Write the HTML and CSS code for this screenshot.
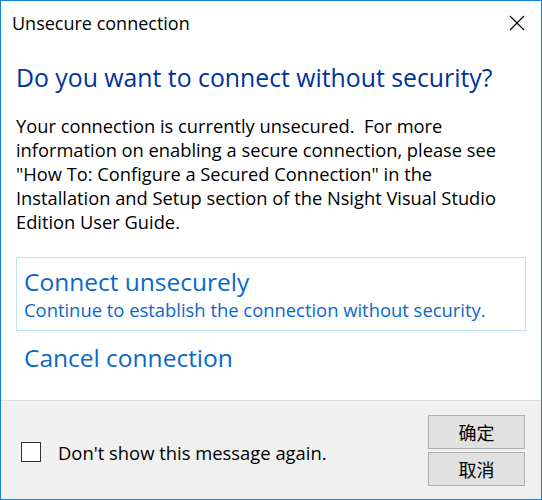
FILE: index.html
```html
<!DOCTYPE html>
<html>
<head>
<meta charset="utf-8">
<link rel="stylesheet" href="styles.css">
</head>
<body>
<div class="window">
  <div class="titlebar">
    <span class="title">Unsecure connection</span>
    <span class="close"><svg width="16" height="16" viewBox="0 0 16 16"><path d="M1 1 L15 15 M15 1 L1 15" stroke="#000" stroke-width="1.1" fill="none"/></svg></span>
  </div>
  <div class="content">
    <h1 class="heading">Do you want to connect without security?</h1>
    <p class="body">Your connection is currently unsecured.&nbsp; For more<br>information on enabling a secure connection, please see<br>"How To: Configure a Secured Connection" in the<br>Installation and Setup section of the Nsight Visual Studio<br>Edition User Guide.</p>
    <div class="links">
      <div class="cmd cmd-hover">
        <div class="cmd-main">Connect unsecurely</div>
        <div class="cmd-sub">Continue to establish the connection without security.</div>
      </div>
      <div class="cmd">
        <div class="cmd-main">Cancel connection</div>
      </div>
    </div>
  </div>
  <div class="footer">
    <label class="check"><span class="box"></span><span class="check-label">Don't show this message again.</span></label>
    <div class="buttons">
      <button class="btn">确定</button>
      <button class="btn">取消</button>
    </div>
  </div>
</div>
</body>
</html>
```

FILE: styles.css
```css
html, body {
  margin: 0;
  padding: 0;
}
body {
  font-family: "Open Sans", "Noto Sans", "Noto Sans CJK SC", sans-serif;
  color: #000;
}
.window {
  width: 542px;
  height: 500px;
  box-sizing: border-box;
  border: 1px solid #1883d7;
  background: #fff;
  display: flex;
  flex-direction: column;
}
.titlebar {
  height: 44px;
  display: flex;
  align-items: center;
  justify-content: space-between;
  padding-left: 11px;
  padding-right: 16px;
  flex: none;
}
.title {
  font-size: 18px;
  margin-top: -1px;
}
.close {
  width: 16px;
  height: 16px;
  display: flex;
}
.content {
  flex: 1;
  padding: 0 15px;
}
.heading {
  margin: 14px 0 0 0;
  font-size: 24.8px;
  font-weight: normal;
  color: #003399;
  line-height: 36px;
  white-space: nowrap;
}
.body {
  margin: 19px 0 0 0;
  font-size: 18.3px;
  line-height: 24px;
  white-space: nowrap;
}
.links {
  margin-top: 23px;
  display: flex;
  flex-direction: column;
}
.cmd {
  border: 1px solid transparent;
  padding: 9px 7px 8px 7px;
  color: #0868cc;
}
.cmd-hover {
  border-color: #c3e0f6;
}
.cmd + .cmd {
  padding-top: 11px;
}
.cmd-main {
  font-size: 24.5px;
  line-height: 30px;
  white-space: nowrap;
}
.cmd-sub {
  font-size: 18.4px;
  line-height: 24px;
  margin-top: 1px;
  white-space: nowrap;
}
.footer {
  flex: none;
  height: 99px;
  box-sizing: border-box;
  border-top: 1px solid #dfdfdf;
  background: #f0f0f0;
  display: flex;
  align-items: center;
  justify-content: space-between;
  padding: 0 16px 0 20px;
}
.check {
  display: flex;
  align-items: center;
  margin-top: 3px;
}
.box {
  width: 18px;
  height: 18px;
  border: 1px solid #333;
  background: #fff;
  display: block;
}
.check-label {
  margin-left: 17px;
  font-size: 18.4px;
  padding-top: 2px;
}
.buttons {
  display: flex;
  flex-direction: column;
  gap: 3px;
}
.btn {
  width: 97px;
  height: 34px;
  box-sizing: border-box;
  border: 1px solid #adadad;
  background: #e1e1e1;
  font-family: "Noto Sans CJK SC", sans-serif;
  font-size: 18px;
  color: #000;
  padding: 0;
  line-height: 1;
}
```
